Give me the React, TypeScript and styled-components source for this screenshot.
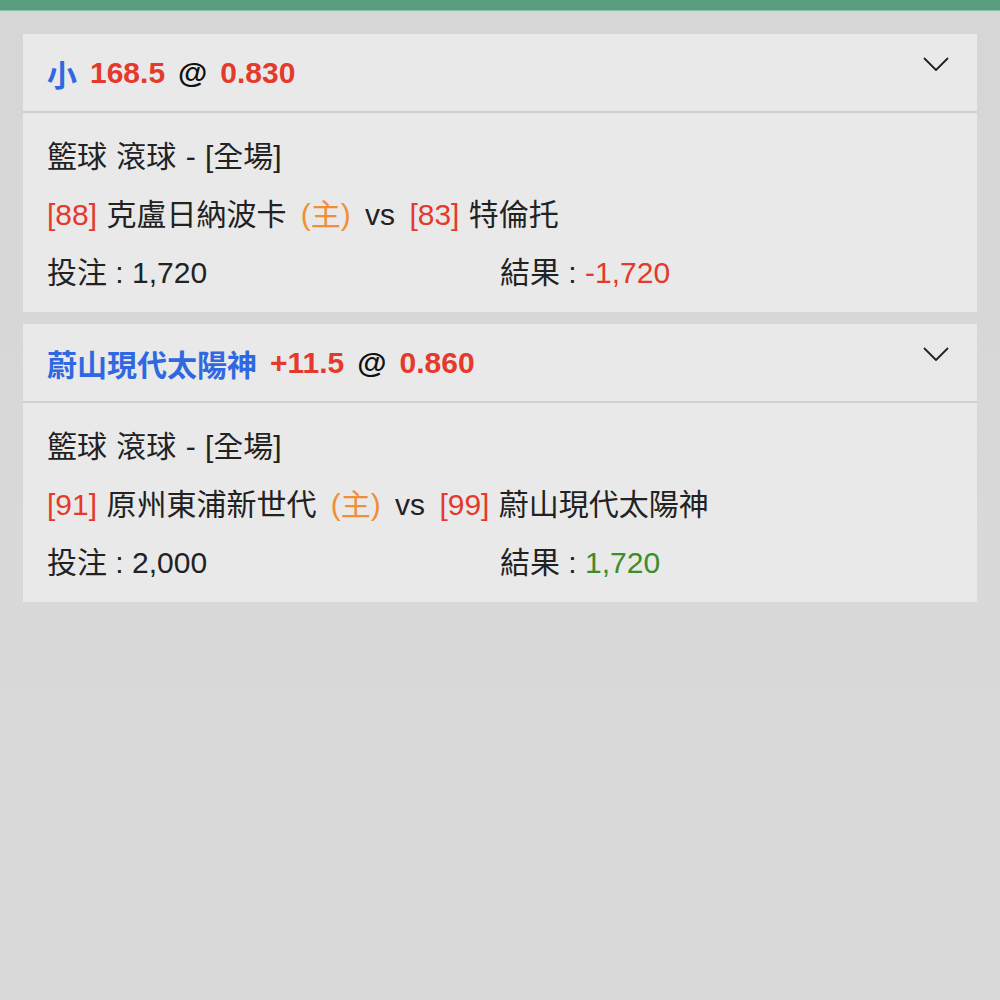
import React from "react";
import styled, { createGlobalStyle } from "styled-components";

const Global = createGlobalStyle`
  html, body { margin: 0; padding: 0; background: #d7d7d7; }
  body { font-family: "Liberation Sans", Arial, "Noto Sans CJK TC", sans-serif; }
`;

const Page = styled.div`
  min-height: 1000px;
  background: linear-gradient(#d6d6d6, #dadada);
`;

const TopBar = styled.div`
  height: 10px;
  background: #5a9e81;
  border-bottom: 1px solid #8cbfa6;
`;

const List = styled.div`
  display: flex;
  flex-direction: column;
  gap: 12px;
  padding: 23px 23px 0 23px;
  width: 954px;
  box-sizing: content-box;
`;

const Card = styled.div`
  background: #e9e9e9;
`;

const Header = styled.div`
  height: 77px;
  display: flex;
  align-items: center;
  justify-content: space-between;
  padding: 0 28px 0 24px;
  border-bottom: 2px solid #cfcfcf;
  font-size: 30px;
  font-weight: bold;
`;

const Title = styled.div`
  display: flex;
  align-items: center;
  gap: 13px;
`;

const Tone = styled.span<{ $c: string }>`
  color: ${(p) => p.$c};
`;

const HomeTag = styled.span`
  color: #ef8f37;
  margin: 0 5px;
`;

const Versus = styled.span`
  margin-right: 5px;
`;

const Chevron = styled.svg`
  width: 26px;
  height: 15px;
  margin-top: -17px;
`;

const Body = styled.div`
  padding: 15px 24px 10px 24px;
  font-size: 30px;
  color: #222;
`;

const Line = styled.div`
  height: 58px;
  line-height: 58px;
  white-space: pre;
  word-spacing: 1px;
`;

const Split = styled.div`
  height: 58px;
  line-height: 58px;
  display: grid;
  grid-template-columns: 1fr 1fr;
  white-space: pre;
`;

const RED = "#e43a2c";
const BLUE = "#2f68e0";
const GREEN = "#3b8e2c";

type Bet = {
  pick: string;
  line: string;
  odds: string;
  homeNo: string;
  home: string;
  awayNo: string;
  away: string;
  stake: string;
  result: string;
  resultColor: string;
};

const bets: Bet[] = [
  { pick: "小", line: "168.5", odds: "0.830", homeNo: "[88]", home: "克盧日納波卡", awayNo: "[83]", away: "特倫托", stake: "1,720", result: "-1,720", resultColor: RED },
  { pick: "蔚山現代太陽神", line: "+11.5", odds: "0.860", homeNo: "[91]", home: "原州東浦新世代", awayNo: "[99]", away: "蔚山現代太陽神", stake: "2,000", result: "1,720", resultColor: GREEN },
];

export default function App() {
  return (
    <Page>
      <Global />
      <TopBar />
      <List>
        {bets.map((b, i) => (
          <Card key={i}>
            <Header>
              <Title>
                <Tone $c={BLUE}>{b.pick}</Tone>
                <Tone $c={RED}>{b.line}</Tone>
                <Tone $c="#111">@</Tone>
                <Tone $c={RED}>{b.odds}</Tone>
              </Title>
              <Chevron viewBox="0 0 26 15" fill="none" stroke="#222" strokeWidth="1.8" strokeLinecap="round" strokeLinejoin="round">
                <path d="M1.5 1.5 L13 13 L24.5 1.5" />
              </Chevron>
            </Header>
            <Body>
              <Line>籃球 滾球 - [全場]</Line>
              <Line>
                <Tone $c={RED}>{b.homeNo}</Tone>{" " + b.home + " "}
                <HomeTag>(主)</HomeTag>{" "}
                <Versus>vs</Versus>{" "}
                <Tone $c={RED}>{b.awayNo}</Tone>{" " + b.away}
              </Line>
              <Split>
                <span>投注 : {b.stake}</span>
                <span>
                  結果 : <Tone $c={b.resultColor}>{b.result}</Tone>
                </span>
              </Split>
            </Body>
          </Card>
        ))}
      </List>
    </Page>
  );
}
